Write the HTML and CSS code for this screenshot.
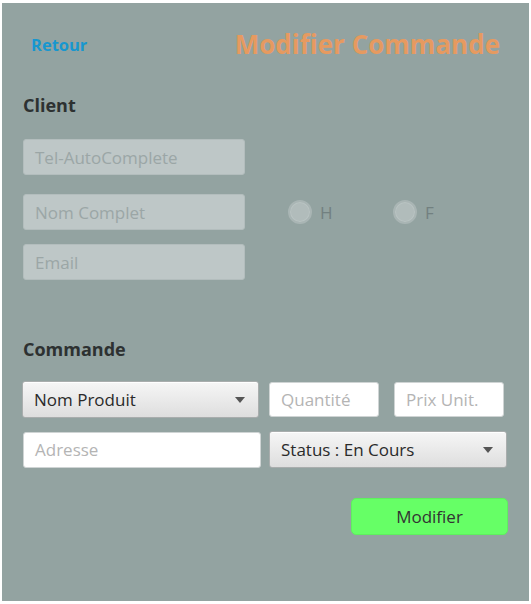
FILE: index.html
```html
<!DOCTYPE html>
<html lang="fr">
<head>
<meta charset="utf-8">
<title>Modifier Commande</title>
<link rel="stylesheet" href="styles.css">
</head>
<body>
<div class="panel">
  <div class="header">
    <a class="back">Retour</a>
    <h1 class="title">Modifier Commande</h1>
  </div>

  <h2 class="section client-title">Client</h2>
  <div class="client">
    <div class="row r1">
      <div class="field disabled">Tel-AutoComplete</div>
    </div>
    <div class="row r2">
      <div class="field disabled">Nom Complet</div>
      <div class="radios">
        <div class="radio"><span class="dot"></span><span class="rlabel">H</span></div>
        <div class="radio"><span class="dot"></span><span class="rlabel">F</span></div>
      </div>
    </div>
    <div class="row r3">
      <div class="field disabled">Email</div>
    </div>
  </div>

  <h2 class="section cmd-title">Commande</h2>
  <div class="cmd">
    <div class="row c1">
      <div class="combo w-prod"><span>Nom Produit</span><span class="arrow"></span></div>
      <div class="field white w-small">Quantité</div>
      <div class="field white w-small">Prix Unit.</div>
    </div>
    <div class="row c2">
      <div class="field white w-addr">Adresse</div>
      <div class="combo w-status"><span>Status : En Cours</span><span class="arrow"></span></div>
    </div>
  </div>

  <div class="actions">
    <button class="submit">Modifier</button>
  </div>
</div>
</body>
</html>
```

FILE: styles.css
```css
* { box-sizing: border-box; }
html, body { margin: 0; padding: 0; }
body {
  background: #ffffff;
  width: 531px;
  height: 604px;
  overflow: hidden;
  font-family: "Open Sans", "Noto Sans", "DejaVu Sans", sans-serif;
  padding: 3px 0 0 2px;
}
.panel {
  width: 527px;
  height: 598px;
  background: #93a3a1;
  padding: 26px 0 0 21px;
  display: flex;
  flex-direction: column;
}
.header {
  height: 30px;
  display: flex;
  align-items: center;
  justify-content: space-between;
  padding: 0 29px 0 8px;
}
.back {
  color: #1797cf;
  font-weight: 700;
  font-size: 16.5px;
}
.title {
  margin: 0;
  color: #e69a60;
  font-weight: 700;
  font-size: 26px;
}
.section {
  margin: 0;
  height: 24px;
  line-height: 24px;
  font-size: 18px;
  font-weight: 700;
  color: #2d3131;
}
.client-title { margin-top: 34px; }
.client { margin-top: 22px; display: flex; flex-direction: column; }
.row { display: flex; align-items: center; }
.r2 { margin-top: 19px; }
.r3 { margin-top: 14px; }
.field {
  height: 36px;
  padding-left: 11px;
  display: flex;
  align-items: center;
  font-size: 17px;
  border-radius: 3px;
}
.disabled {
  width: 222px;
  background: #bec7c7;
  border: 1px solid #b3bdbd;
  color: #9ba6a6;
}
.radios { display: flex; margin-left: 43px; }
.radio { display: flex; align-items: center; width: 105px; }
.dot {
  width: 24px;
  height: 24px;
  border-radius: 50%;
  background: #b1bcbb;
  border: 2px solid #a9b5b4;
  box-shadow: inset 0 0 0 1px #bac4c3;
}
.rlabel {
  margin-left: 8px;
  font-size: 17px;
  color: #728080;
}
.cmd-title { margin-top: 57px; }
.cmd { margin-top: 20px; }
.c1 { gap: 10px; margin-left: -1px; }
.c2 { margin-top: 13px; gap: 8px; }
.white {
  background: #ffffff;
  border: 1px solid #cfd4d4;
  color: #b4b4b4;
}
.w-small { width: 110px; height: 35px; }
.c1 .w-small + .w-small { margin-left: 5px; }
.w-addr { width: 238px; }
.combo {
  height: 37px;
  border-radius: 3px;
  border: 1px solid #a9adad;
  background: linear-gradient(#f6f6f6, #dedede);
  display: flex;
  align-items: center;
  justify-content: space-between;
  padding: 0 13px 0 11px;
  font-size: 17px;
  color: #2a2a2a;
  box-shadow: inset 0 1px 0 #ffffff;
}
.w-prod { width: 237px; }
.w-status { width: 238px; }
.arrow {
  width: 0;
  height: 0;
  border-left: 5.5px solid transparent;
  border-right: 5.5px solid transparent;
  border-top: 6px solid #555555;
}
.actions {
  margin-top: 30px;
  display: flex;
  justify-content: flex-end;
  padding-right: 21px;
}
.submit {
  width: 157px;
  height: 37px;
  background: #66ff66;
  border: 1px solid #5ef05e;
  border-radius: 5px;
  font-family: inherit;
  font-size: 17px;
  color: #333333;
  padding: 0;
}
```
